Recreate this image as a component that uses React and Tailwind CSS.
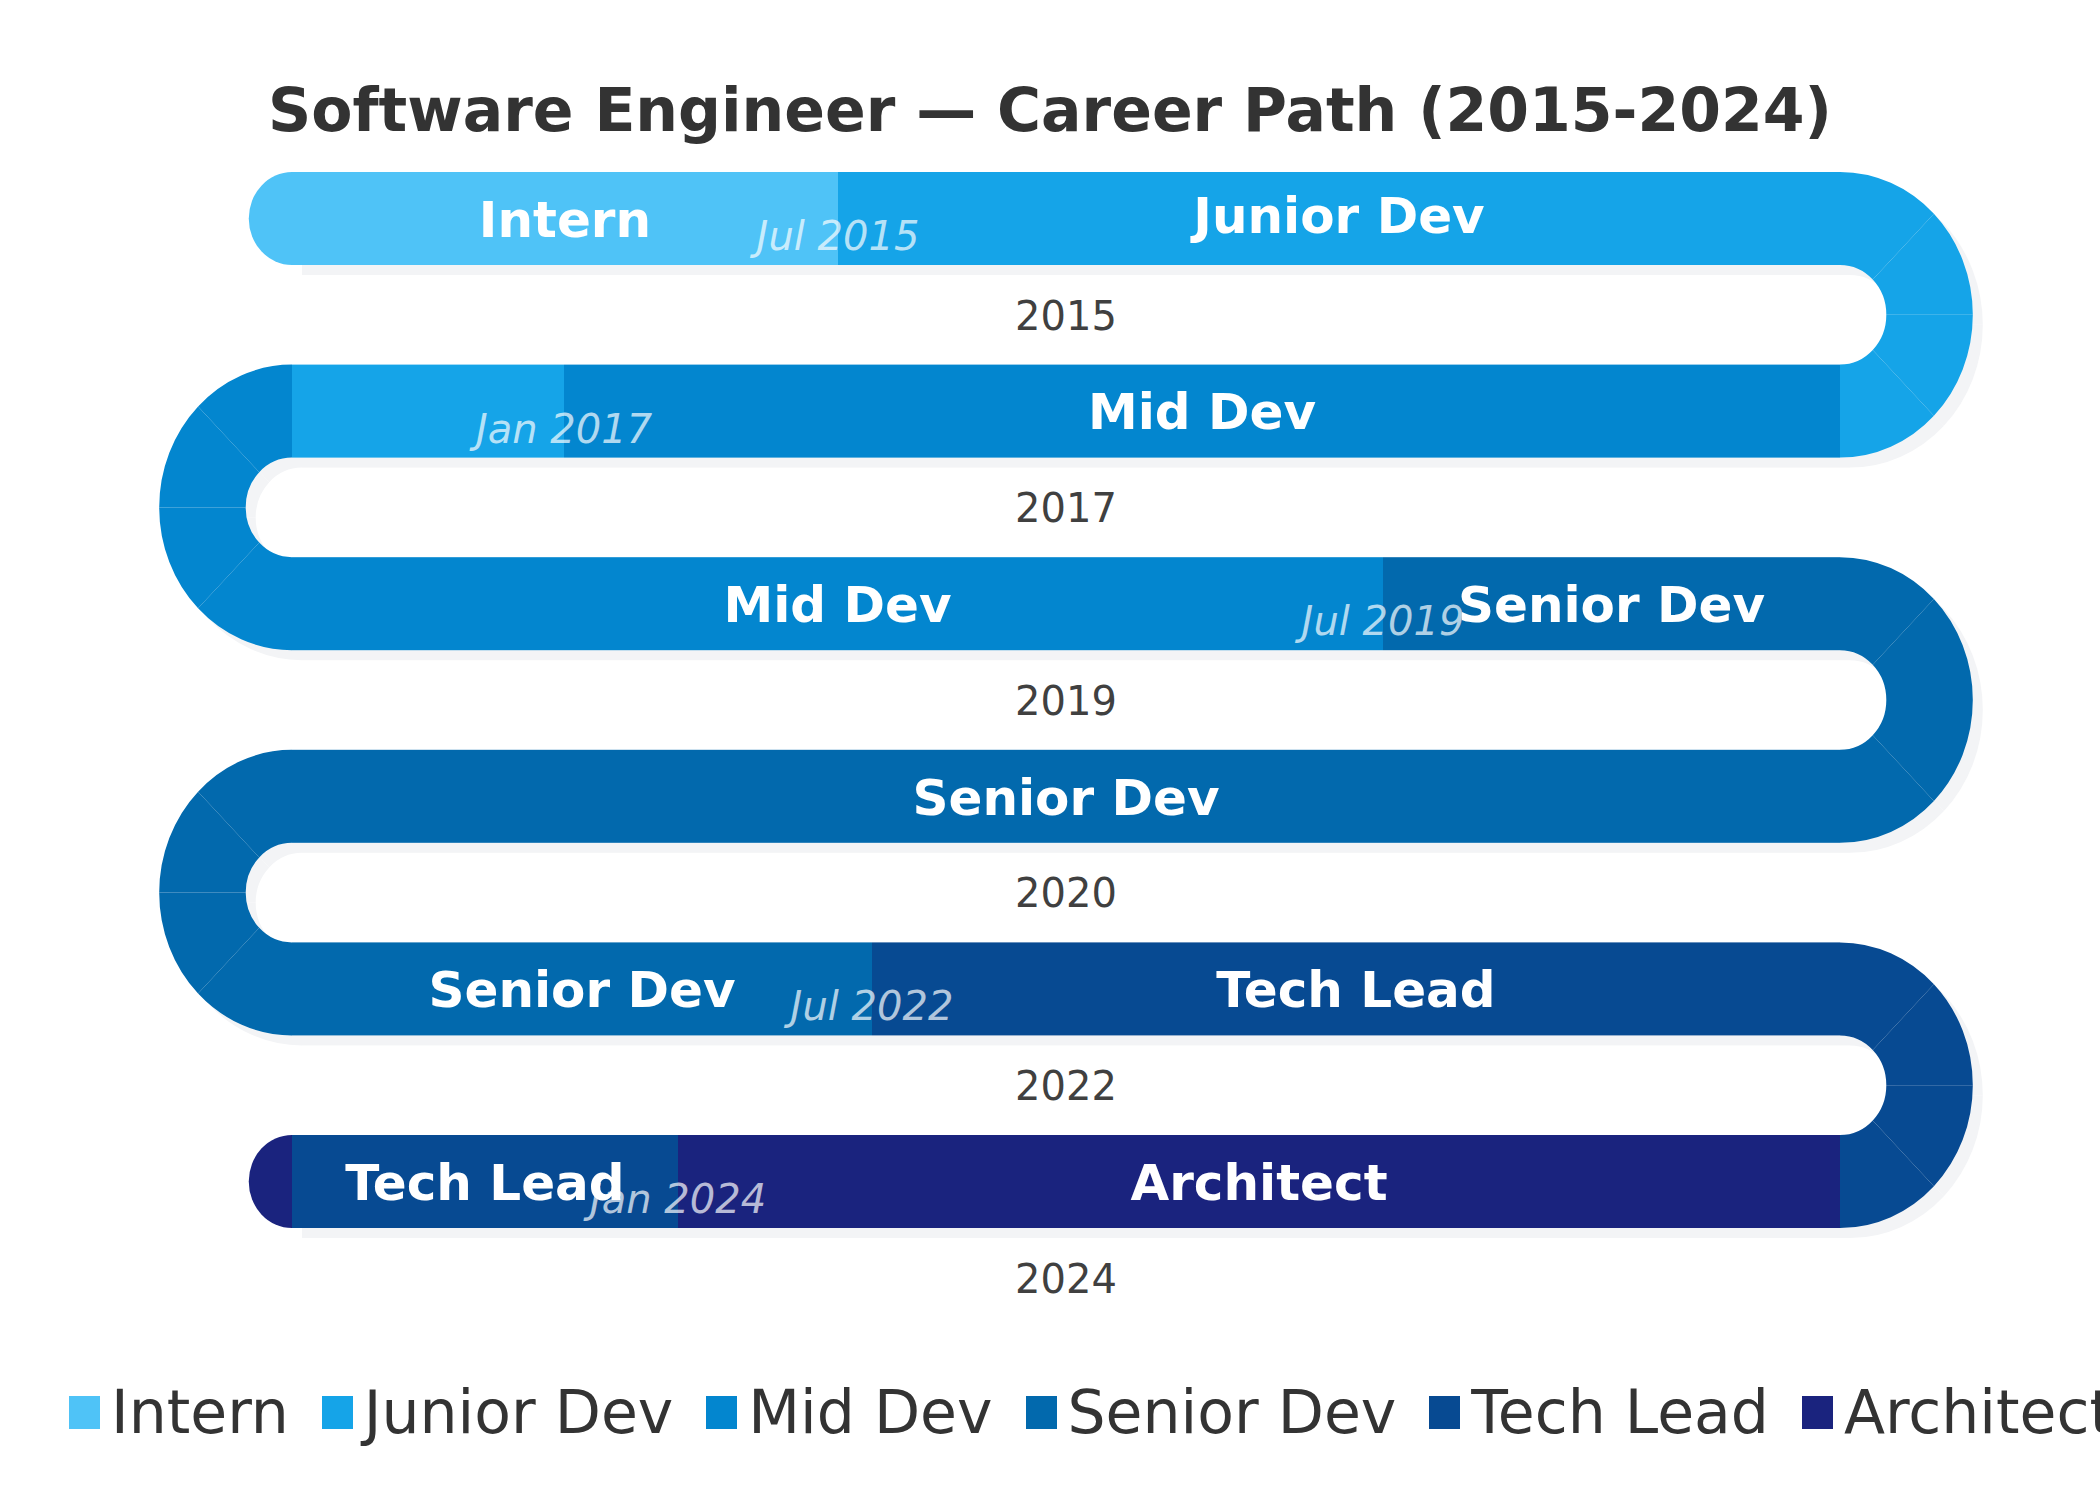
import React from "react";

const C = {
  intern: "#4FC3F7",
  junior: "#15A4E8",
  mid: "#0386CF",
  senior: "#0269AD",
  tech: "#074A92",
  arch: "#1A237E",
};

const L = 292;
const R = 1840;
const T0 = 172;
const P = 192.6;
const H = 93;
const top = (i) => T0 + P * i;
const ctr = (i) => top(i) + H / 2;

const ROY = P / 2 + H / 2;
const RIY = P / 2 - H / 2;
const ROX = ROY * 0.93;
const RIX = RIY * 0.93;
const CAPRY = H / 2;
const CAPRX = CAPRY * 0.93;

const f = (n) => n.toFixed(2);

function turnWedges(cx, cy, side) {
  const out = [];
  for (let k = 0; k < 4; k++) {
    let a1, a2, s1, s2;
    if (side === "right") {
      a1 = -90 + 45 * k;
      a2 = a1 + 45;
      s1 = 1;
      s2 = 0;
    } else {
      a1 = 270 - 45 * k;
      a2 = a1 - 45;
      s1 = 0;
      s2 = 1;
    }
    const r1 = (a1 * Math.PI) / 180;
    const r2 = (a2 * Math.PI) / 180;
    const o1 = [cx + ROX * Math.cos(r1), cy + ROY * Math.sin(r1)];
    const o2 = [cx + ROX * Math.cos(r2), cy + ROY * Math.sin(r2)];
    const i1 = [cx + RIX * Math.cos(r1), cy + RIY * Math.sin(r1)];
    const i2 = [cx + RIX * Math.cos(r2), cy + RIY * Math.sin(r2)];
    out.push(
      `M ${f(o1[0])} ${f(o1[1])} A ${f(ROX)} ${f(ROY)} 0 0 ${s1} ${f(o2[0])} ${f(o2[1])} L ${f(i2[0])} ${f(i2[1])} A ${f(RIX)} ${f(RIY)} 0 0 ${s2} ${f(i1[0])} ${f(i1[1])} Z`
    );
  }
  return out;
}

function capPath(i) {
  const t = top(i);
  const b = t + H;
  return `M ${L + 2} ${f(t)} L ${L} ${f(t)} A ${f(CAPRX)} ${f(CAPRY)} 0 0 0 ${L} ${f(b)} L ${L + 2} ${f(b)} Z`;
}

const rows = [
  {
    segs: [
      { x1: L, x2: 838, c: C.intern, label: "Intern" },
      { x1: 838, x2: R, c: C.junior, label: "Junior Dev" },
    ],
    date: { x: 838, t: "Jul 2015" },
    year: "2015",
    cap: C.intern,
  },
  {
    segs: [
      { x1: L, x2: 564, c: C.junior },
      { x1: 564, x2: R, c: C.mid, label: "Mid Dev" },
    ],
    date: { x: 564, t: "Jan 2017" },
    year: "2017",
  },
  {
    segs: [
      { x1: L, x2: 1383, c: C.mid, label: "Mid Dev" },
      { x1: 1383, x2: R, c: C.senior, label: "Senior Dev" },
    ],
    date: { x: 1383, t: "Jul 2019" },
    year: "2019",
  },
  {
    segs: [{ x1: L, x2: R, c: C.senior, label: "Senior Dev" }],
    year: "2020",
  },
  {
    segs: [
      { x1: L, x2: 872, c: C.senior, label: "Senior Dev" },
      { x1: 872, x2: R, c: C.tech, label: "Tech Lead" },
    ],
    date: { x: 872, t: "Jul 2022" },
    year: "2022",
  },
  {
    segs: [
      { x1: L, x2: 678, c: C.tech, label: "Tech Lead" },
      { x1: 678, x2: R, c: C.arch, label: "Architect" },
    ],
    date: { x: 678, t: "Jan 2024" },
    year: "2024",
    cap: C.arch,
  },
];

const turns = [
  { after: 0, side: "right", c: C.junior },
  { after: 1, side: "left", c: C.mid },
  { after: 2, side: "right", c: C.senior },
  { after: 3, side: "left", c: C.senior },
  { after: 4, side: "right", c: C.tech },
];

const legend = [
  ["Intern", C.intern],
  ["Junior Dev", C.junior],
  ["Mid Dev", C.mid],
  ["Senior Dev", C.senior],
  ["Tech Lead", C.tech],
  ["Architect", C.arch],
];

const hasDescender = (s) => /[Jgjpqy]/.test(s);

function Shapes({ shadow }) {
  const fill = (c) => (shadow ? "#f3f4f6" : c);
  return (
    <g transform={shadow ? "translate(10 10)" : undefined}>
      {turns.map((tn, k) => {
        const cx = tn.side === "right" ? R : L;
        const cy = ctr(tn.after) + P / 2;
        return turnWedges(cx, cy, tn.side).map((d, j) => (
          <path key={`t${k}-${j}`} d={d} fill={fill(tn.c)} />
        ));
      })}
      {!shadow &&
        rows.map((r, i) =>
          r.cap ? <path key={`cap${i}`} d={capPath(i)} fill={r.cap} /> : null
        )}
      {rows.map((r, i) =>
        r.segs.map((s, j) => (
          <rect
            key={`r${i}-${j}`}
            x={s.x1}
            y={top(i)}
            width={s.x2 - s.x1}
            height={H}
            fill={fill(s.c)}
          />
        ))
      )}
    </g>
  );
}

export default function App() {
  return (
    <div className="w-[2100px] h-[1500px] bg-white overflow-hidden flex flex-col font-['DejaVu_Sans',sans-serif]">
      <div className="h-[150px] shrink-0 pt-[80px] text-center text-[60px] leading-none font-bold text-[#333333]">
        Software Engineer — Career Path (2015-2024)
      </div>
      <svg
        width="2100"
        height="1210"
        viewBox="0 150 2100 1210"
        className="block shrink-0 font-['DejaVu_Sans',sans-serif]"
      >
        <Shapes shadow />
        <Shapes />
        {rows.map((r, i) => (
          <g key={`lab${i}`}>
            {r.segs.map((s, j) =>
              s.label ? (
                <text
                  key={j}
                  x={(s.x1 + s.x2) / 2}
                  y={ctr(i) + (hasDescender(s.label) ? 14.2 : 18.2)}
                  textAnchor="middle"
                  className="fill-white font-bold text-[50px]"
                >
                  {s.label}
                </text>
              ) : null
            )}
            {r.date ? (
              <text
                x={r.date.x}
                y={ctr(i) + 31.5}
                textAnchor="middle"
                className="fill-white/70 italic text-[40px]"
              >
                {r.date.t}
              </text>
            ) : null}
            <text
              x={(L + R) / 2}
              y={ctr(i) + 111}
              textAnchor="middle"
              className="fill-[#404040] text-[40px]"
            >
              {r.year}
            </text>
          </g>
        ))}
      </svg>
      <div className="mt-[22px] flex items-center pl-[69px] gap-[33px] whitespace-nowrap text-[60px] leading-none text-[#333333]">
        {legend.map(([name, color]) => (
          <div key={name} className="flex items-center gap-[11px] shrink-0">
            <span
              className="block w-[31px] h-[33px] shrink-0"
              style={{ backgroundColor: color }}
            />
            <span>{name}</span>
          </div>
        ))}
      </div>
    </div>
  );
}
